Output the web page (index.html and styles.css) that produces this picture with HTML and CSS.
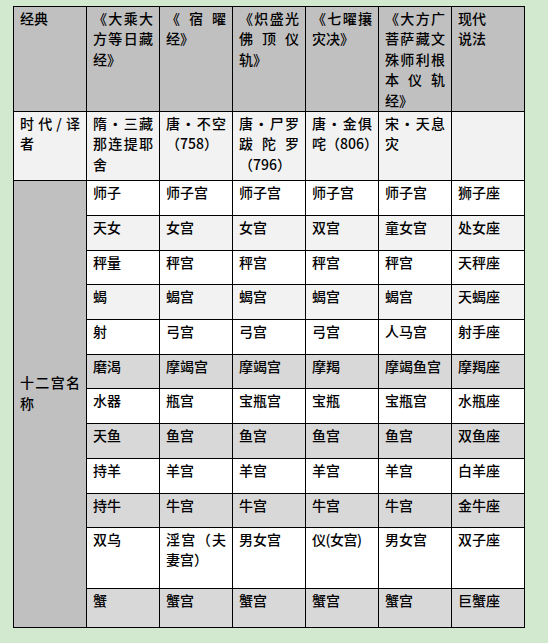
FILE: index.html
```html
<!DOCTYPE html>
<html lang="zh-CN">
<head>
<meta charset="utf-8">
<title>十二宫名称对照</title>
<link rel="stylesheet" href="styles.css">
</head>
<body>
<div class="page">
<table class="grid">
  <colgroup>
    <col><col><col><col><col><col><col>
  </colgroup>
  <tr class="r-head">
    <td class="gray">经典</td>
    <td class="gray">《大乘大方等日藏经》</td>
    <td class="gray">《宿曜经》</td>
    <td class="gray">《炽盛光佛顶仪轨》</td>
    <td class="gray">《七曜攘灾决》</td>
    <td class="gray">《大方广菩萨藏文殊师利根本仪轨经》</td>
    <td class="gray">现代<br>说法</td>
  </tr>
  <tr class="r-era light">
    <td>时代/译者</td>
    <td>隋·三藏那连提耶舍</td>
    <td>唐·不空（758）</td>
    <td>唐·尸罗跋陀罗（796）</td>
    <td>唐·金俱咤（806）</td>
    <td>宋·天息灾</td>
    <td></td>
  </tr>
  <tr class="h35 white">
    <td class="gray name" rowspan="12">十二宫名称</td>
    <td>师子</td><td>师子宫</td><td>师子宫</td><td>师子宫</td><td>师子宫</td><td>狮子座</td>
  </tr>
  <tr class="h35 light">
    <td>天女</td><td>女宫</td><td>女宫</td><td>双宫</td><td>童女宫</td><td>处女座</td>
  </tr>
  <tr class="h34 white">
    <td>秤量</td><td>秤宫</td><td>秤宫</td><td>秤宫</td><td>秤宫</td><td>天秤座</td>
  </tr>
  <tr class="h35 light">
    <td>蝎</td><td>蝎宫</td><td>蝎宫</td><td>蝎宫</td><td>蝎宫</td><td>天蝎座</td>
  </tr>
  <tr class="h35 white">
    <td>射</td><td>弓宫</td><td>弓宫</td><td>弓宫</td><td>人马宫</td><td>射手座</td>
  </tr>
  <tr class="h34 dark">
    <td>磨渴</td><td>摩竭宫</td><td>摩竭宫</td><td>摩羯</td><td>摩竭鱼宫</td><td>摩羯座</td>
  </tr>
  <tr class="h35 white">
    <td>水器</td><td>瓶宫</td><td>宝瓶宫</td><td>宝瓶</td><td>宝瓶宫</td><td>水瓶座</td>
  </tr>
  <tr class="h35 dark">
    <td>天鱼</td><td>鱼宫</td><td>鱼宫</td><td>鱼宫</td><td>鱼宫</td><td>双鱼座</td>
  </tr>
  <tr class="h35 white">
    <td>持羊</td><td>羊宫</td><td>羊宫</td><td>羊宫</td><td>羊宫</td><td>白羊座</td>
  </tr>
  <tr class="h34 dark">
    <td>持牛</td><td>牛宫</td><td>牛宫</td><td>牛宫</td><td>牛宫</td><td>金牛座</td>
  </tr>
  <tr class="h61 white">
    <td>双乌</td><td>淫宫（夫妻宫）</td><td>男女宫</td><td class="tight">仪(女宫)</td><td>男女宫</td><td>双子座</td>
  </tr>
  <tr class="h39 dark">
    <td>蟹</td><td>蟹宫</td><td>蟹宫</td><td>蟹宫</td><td>蟹宫</td><td>巨蟹座</td>
  </tr>
</table>
</div>
</body>
</html>
```

FILE: styles.css
```css
html, body {
  margin: 0;
  padding: 0;
  background: #d2e9cf;
}

.page {
  width: 548px;
  height: 643px;
  padding: 6px 0 0 13px;
  box-sizing: border-box;
  background: #d2e9cf;
}

.grid {
  border-collapse: separate;
  border-spacing: 0;
  table-layout: fixed;
  width: 512px;
  border-top: 1px solid #000;
  border-left: 1px solid #000;
  font-family: "Noto Sans CJK SC", "Noto Sans", sans-serif;
  font-size: 14px;
  font-weight: 500;
  line-height: 20.4px;
  color: #000;
}

.grid col {
  width: 73px;
}

.grid td {
  border-right: 1px solid #000;
  border-bottom: 1px solid #000;
  padding: 1px 6px 0 6px;
  vertical-align: top;
  text-align: justify;
  word-break: break-all;
  overflow: hidden;
}

.r-head { height: 105px; }
.r-era { height: 69px; }
.h35 { height: 35px; }
.h34 { height: 34px; }
.h61 { height: 61px; }
.h39 { height: 39px; }

.gray, .grid td.gray { background: #c0c0c0; }
.white td { background: #ffffff; }
.light td { background: #f2f2f2; }
.dark td { background: #d8d8d8; }
.grid tr td.name {
  background: #c0c0c0;
  vertical-align: middle;
  padding-bottom: 24px;
}

.tight {
  white-space: nowrap;
  letter-spacing: -0.5px;
}
```
